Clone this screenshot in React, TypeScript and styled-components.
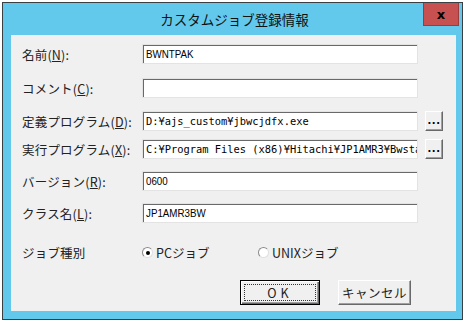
import styled, { createGlobalStyle } from 'styled-components';

const GlobalStyle = createGlobalStyle`
  html, body {
    margin: 0;
    padding: 0;
    background: #ffffff;
  }
  body {
    font-family: "Noto Sans CJK JP", "Noto Sans", sans-serif;
    color: #1a1a1a;
  }
`;

const Page = styled.div`
  width: 469px;
  height: 325px;
  padding: 2px 0 0 2px;
  box-sizing: border-box;
`;

const Window = styled.div`
  width: 461px;
  height: 318px;
  box-sizing: border-box;
  border: 1px solid #3a3f44;
  background: #62c9ec;
  display: flex;
  flex-direction: column;
  padding: 0 6px 8px 8px;
`;

const TitleBar = styled.div`
  height: 32px;
  flex: none;
  display: flex;
  align-items: center;
  justify-content: center;
  position: relative;
`;

const Title = styled.span`
  font-size: 13.5px;
  color: #111;
  margin-top: 0;
  margin-left: 2px;
`;

const CloseButton = styled.div`
  position: absolute;
  top: 0;
  right: -3px;
  width: 36px;
  height: 23px;
  background: #c75050;
  border: 1px solid #9b3b3b;
  border-top: none;
  box-sizing: border-box;
  display: flex;
  align-items: center;
  justify-content: center;
  font-family: "DejaVu Sans", sans-serif;
  font-weight: bold;
  font-size: 13px;
  color: #000;
`;

const Client = styled.div`
  flex: 1;
  background: #f0f0f0;
  padding: 9px 0 0 11px;
  box-sizing: border-box;
  display: flex;
  flex-direction: column;
`;

const Row = styled.div<{ $top: number }>`
  display: grid;
  grid-template-columns: 120px 276px 18px;
  align-items: center;
  height: 20px;
  margin-top: ${(p) => p.$top}px;
`;

const Label = styled.span`
  font-size: 12.5px;
  white-space: nowrap;
  letter-spacing: 0.2px;
  color: #222;
`;

const Key = styled.span`
  text-decoration: underline;
  text-underline-offset: 1px;
`;

const Field = styled.div<{ $mono?: boolean }>`
  height: 20px;
  box-sizing: border-box;
  background: #ffffff;
  border-top: 1px solid #a0a0a0;
  border-left: 1px solid #a0a0a0;
  border-bottom: 1px solid #ffffff;
  border-right: 1px solid #ffffff;
  box-shadow: inset 1px 1px 0 #696969;
  outline: 1px solid #e3e3e3;
  outline-offset: -1px;
  padding: 0 0 0 3px;
  display: flex;
  align-items: center;
  overflow: hidden;
  white-space: nowrap;
  font-family: ${(p) =>
    p.$mono
      ? '"DejaVu Sans Mono", "Noto Sans CJK JP", monospace'
      : '"Liberation Sans", "Noto Sans CJK JP", sans-serif'};
  font-size: ${(p) => (p.$mono ? '10.4px' : '11.5px')};
  color: #000;
`;

const Tight = styled.span`
  transform: scaleX(0.85);
  transform-origin: left center;
  display: inline-block;
`;

const BrowseButton = styled.div`
  margin-left: 7px;
  width: 18px;
  height: 20px;
  box-sizing: border-box;
  background: #f0f0f0;
  border-top: 1px solid #ffffff;
  border-left: 1px solid #ffffff;
  border-right: 1px solid #696969;
  border-bottom: 1px solid #696969;
  box-shadow: inset -1px -1px 0 #a0a0a0;
  display: flex;
  align-items: flex-end;
  justify-content: center;
  padding-bottom: 4px;
  font-family: "DejaVu Sans", sans-serif;
  font-size: 10px;
  font-weight: bold;
  line-height: 1;
  letter-spacing: 0.5px;
  color: #000;
`;

const RadioRow = styled.div`
  display: grid;
  grid-template-columns: 120px 116px auto;
  align-items: center;
  margin-top: 20px;
  height: 16px;
`;

const RadioOption = styled.div`
  display: flex;
  align-items: center;
  gap: 3px;
  font-size: 12.5px;
  color: #222;
`;

const RadioCircle = styled.span<{ $checked?: boolean }>`
  width: 11px;
  height: 11px;
  box-sizing: border-box;
  border-radius: 50%;
  background: #ffffff;
  border: 1px solid #8a8a8a;
  border-bottom-color: #e0e0e0;
  border-right-color: #e0e0e0;
  display: flex;
  align-items: center;
  justify-content: center;
  &::after {
    content: '';
    width: 4px;
    height: 4px;
    border-radius: 50%;
    background: ${(p) => (p.$checked ? '#000' : 'transparent')};
  }
`;

const ButtonBar = styled.div`
  display: flex;
  gap: 18px;
  margin-top: 21px;
  padding-left: 218px;
`;

const PushButton = styled.div<{ $default?: boolean; $width: number }>`
  width: ${(p) => p.$width}px;
  height: 25px;
  box-sizing: border-box;
  background: #f0f0f0;
  border: 1px solid;
  border-color: ${(p) => (p.$default ? '#000' : '#fff #696969 #696969 #fff')};
  box-shadow: ${(p) =>
    p.$default
      ? 'inset 1px 1px 0 #ffffff, inset -1px -1px 0 #696969, inset -2px -2px 0 #a0a0a0'
      : 'inset -1px -1px 0 #a0a0a0'};
  display: flex;
  align-items: center;
  justify-content: center;
  font-size: 12.5px;
  letter-spacing: ${(p) => (p.$default ? '4px' : '0.5px')};
  color: #222;
  position: relative;
`;

const FocusRing = styled.span`
  position: absolute;
  inset: 3px;
  border: 1px dotted #333;
`;

const rows = [
  { top: 0, label: '名前', key: 'N', value: 'BWNTPAK', mono: false },
  { top: 14, label: 'コメント', key: 'C', value: '', mono: false },
  { top: 13, label: '定義プログラム', key: 'D', value: 'D:¥ajs_custom¥jbwcjdfx.exe', mono: true, browse: true },
  { top: 8, label: '実行プログラム', key: 'X', value: 'C:¥Program Files (x86)¥Hitachi¥JP1AMR3¥Bwstart.exe', mono: true, browse: true },
  { top: 12, label: 'バージョン', key: 'R', value: '0600', mono: false },
  { top: 12, label: 'クラス名', key: 'L', value: 'JP1AMR3BW', mono: false },
];

export default function App() {
  return (
    <Page>
      <GlobalStyle />
      <Window>
        <TitleBar>
          <Title>カスタムジョブ登録情報</Title>
          <CloseButton>x</CloseButton>
        </TitleBar>
        <Client>
          {rows.map((r) => (
            <Row key={r.key} $top={r.top}>
              <Label>
                {r.label}(<Key>{r.key}</Key>):
              </Label>
              <Field $mono={r.mono}>
                {r.mono ? r.value : <Tight>{r.value}</Tight>}
              </Field>
              {r.browse ? <BrowseButton>...</BrowseButton> : <span />}
            </Row>
          ))}
          <RadioRow>
            <Label>ジョブ種別</Label>
            <RadioOption>
              <RadioCircle $checked />
              PCジョブ
            </RadioOption>
            <RadioOption>
              <RadioCircle />
              UNIXジョブ
            </RadioOption>
          </RadioRow>
          <ButtonBar>
            <PushButton $default $width={80}>
              OK
              <FocusRing />
            </PushButton>
            <PushButton $width={73}>キャンセル</PushButton>
          </ButtonBar>
        </Client>
      </Window>
    </Page>
  );
}
